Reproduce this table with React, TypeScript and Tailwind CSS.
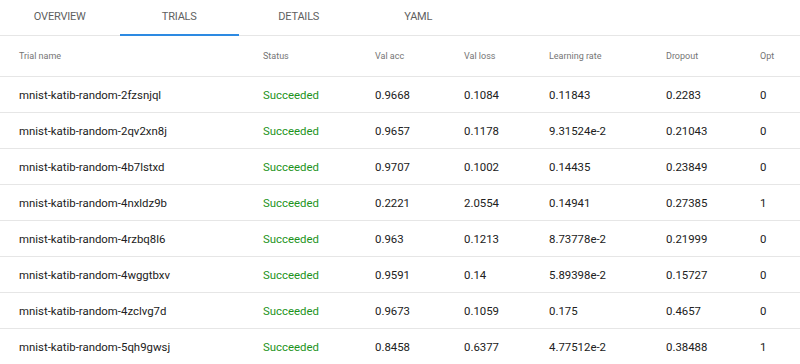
import React from 'react';

interface Trial {
  name: string;
  status: string;
  valAcc: string;
  valLoss: string;
  lr: string;
  dropout: string;
  opt: string;
}

const tabs = ['OVERVIEW', 'TRIALS', 'DETAILS', 'YAML'];

const trials: Trial[] = [
  { name: 'mnist-katib-random-2fzsnjql', status: 'Succeeded', valAcc: '0.9668', valLoss: '0.1084', lr: '0.11843', dropout: '0.2283', opt: '0' },
  { name: 'mnist-katib-random-2qv2xn8j', status: 'Succeeded', valAcc: '0.9657', valLoss: '0.1178', lr: '9.31524e-2', dropout: '0.21043', opt: '0' },
  { name: 'mnist-katib-random-4b7lstxd', status: 'Succeeded', valAcc: '0.9707', valLoss: '0.1002', lr: '0.14435', dropout: '0.23849', opt: '0' },
  { name: 'mnist-katib-random-4nxldz9b', status: 'Succeeded', valAcc: '0.2221', valLoss: '2.0554', lr: '0.14941', dropout: '0.27385', opt: '1' },
  { name: 'mnist-katib-random-4rzbq8l6', status: 'Succeeded', valAcc: '0.963', valLoss: '0.1213', lr: '8.73778e-2', dropout: '0.21999', opt: '0' },
  { name: 'mnist-katib-random-4wggtbxv', status: 'Succeeded', valAcc: '0.9591', valLoss: '0.14', lr: '5.89398e-2', dropout: '0.15727', opt: '0' },
  { name: 'mnist-katib-random-4zclvg7d', status: 'Succeeded', valAcc: '0.9673', valLoss: '0.1059', lr: '0.175', dropout: '0.4657', opt: '0' },
  { name: 'mnist-katib-random-5qh9gwsj', status: 'Succeeded', valAcc: '0.8458', valLoss: '0.6377', lr: '4.77512e-2', dropout: '0.38488', opt: '1' },
];

// column starts: 19, 263, 375, 464, 549, 666, 760
const cols = 'grid grid-cols-[244px_112px_89px_85px_117px_94px_1fr] pl-[19px]';

export default function App() {
  return (
    <div className="w-[800px] h-[364px] overflow-hidden bg-white" style={{ fontFamily: 'Roboto, "Liberation Sans", sans-serif' }}>
      <div className="flex h-[36px] border-b border-[#e6e6e6]">
        {tabs.map((t) => (
          <div
            key={t}
            className={`w-[119.5px] flex items-center justify-center text-[11px] tracking-[-0.2px] text-[#5f5f5f] border-b-2 -mb-px ${
              t === 'TRIALS' ? 'border-[#2d8ae2]' : 'border-transparent'
            }`}
          >
            {t}
          </div>
        ))}
      </div>

      <div className={`${cols} h-[41px] pt-px items-center border-b border-[#e6e6e6] text-[9px] text-[#757575]`}>
        <span>Trial name</span>
        <span>Status</span>
        <span>Val acc</span>
        <span>Val loss</span>
        <span>Learning rate</span>
        <span>Dropout</span>
        <span>Opt</span>
      </div>

      {trials.map((r) => (
        <div key={r.name} className={`${cols} h-[36px] pt-[2px] items-center border-b border-[#e6e6e6] text-[11.4px] text-[#212121]`}>
          <span>{r.name}</span>
          <span className="text-[#1c931c]">{r.status}</span>
          <span>{r.valAcc}</span>
          <span>{r.valLoss}</span>
          <span>{r.lr}</span>
          <span>{r.dropout}</span>
          <span>{r.opt}</span>
        </div>
      ))}
    </div>
  );
}
